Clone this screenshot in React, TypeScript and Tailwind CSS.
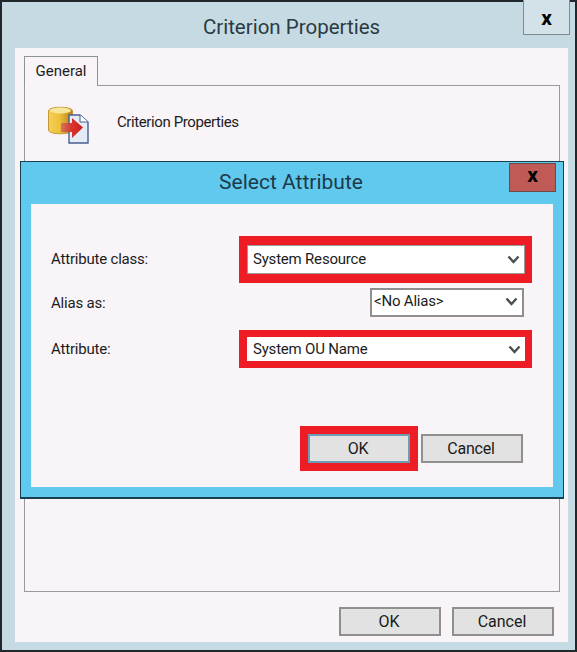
const sans = "font-['Roboto',sans-serif]";

function Chevron() {
  return (
    <svg width="13" height="9" viewBox="0 0 13 9" className="shrink-0">
      <path d="M1.5 1.5 L6.5 7 L11.5 1.5" fill="none" stroke="#4a4f52" strokeWidth="2.4" />
    </svg>
  );
}

function DbIcon() {
  return (
    <svg width="42" height="38" viewBox="0 0 42 38" className="shrink-0">
      <defs>
        <linearGradient id="db" x1="0" x2="1" y1="0" y2="0">
          <stop offset="0" stopColor="#f3cf58" />
          <stop offset="0.45" stopColor="#efc13a" />
          <stop offset="1" stopColor="#b57f12" />
        </linearGradient>
        <linearGradient id="arrow" x1="0" x2="1" y1="0" y2="0">
          <stop offset="0" stopColor="#cf7a5c" />
          <stop offset="0.45" stopColor="#d8372f" />
          <stop offset="1" stopColor="#cf1c1c" />
        </linearGradient>
      </defs>
      <path d="M0.5 5 C0.5 0 24.5 0 24.5 5 L24.5 24 C24.5 29 0.5 29 0.5 24 Z" fill="url(#db)" stroke="#c49a34" />
      <ellipse cx="12.5" cy="4.5" rx="10.5" ry="3" fill="#f8e69a" />
      <path d="M21 9 H32 L40 16 V37 H21 Z" fill="#e4ebf7" stroke="#45608f" strokeWidth="1.4" />
      <path d="M32 9 V16 H40" fill="#fff" stroke="#45608f" />
      <path d="M13 17 H24 V12 L35 21.5 L24 32 V26 H13 Z" fill="url(#arrow)" />
    </svg>
  );
}

function Button({ label, focused }: { label: string; focused?: boolean }) {
  return (
    <div
      className={`flex h-[29px] w-[102px] items-center justify-center border-2 bg-[#e2e2e2] pr-[2px] text-[16px] text-[#1a1a1a] ${
        focused ? 'border-[#6f9bb5]' : 'border-[#8f8f8f]'
      }`}
    >
      {label}
    </div>
  );
}

function Select({ value, className }: { value: string; className: string }) {
  return (
    <div className={`flex items-center justify-between bg-white pr-[4px] text-[15px] text-[#1c1c1c] ${className}`}>
      <span>{value}</span>
      <Chevron />
    </div>
  );
}

export default function App() {
  return (
    <div className={`relative flex h-[652px] w-[577px] flex-col border-2 border-[#20282c] bg-[#c6dae3] ${sans}`}>
      {/* title bar */}
      <div className="relative flex h-[46px] shrink-0 items-center justify-center pl-[6px] pt-[4px] text-[20.5px] text-[#2b3a42]">
        Criterion Properties
        <div className="absolute right-[5px] top-[-2px] flex h-[35px] w-[47px] items-center justify-center border-x border-b border-[#7c8b92] bg-[#d3e2e9] pt-[3px] text-[21px] font-bold text-black">
          x
        </div>
      </div>

      {/* window body */}
      <div className="mx-[13px] flex h-[594px] w-[553px] flex-col bg-[#f8f4f8] px-[9px] pt-[8px]">
        <div className="relative z-10 -mb-px flex h-[30px] w-[74px] items-center justify-center border border-b-0 border-[#8b9499] bg-[#f8f4f8] text-[15px] text-[#1c1c1c]">
          General
        </div>
        <div className="h-[507px] w-[536px] border border-[#9a9a9a]">
          <div className="flex items-start gap-[27px] pl-[23px] pt-[20px]">
            <DbIcon />
            <span className="mt-[5px] text-[15px] tracking-[-0.4px] text-[#1c1c1c]">Criterion Properties</span>
          </div>
        </div>
        <div className="mt-[15px] flex justify-end gap-[11px] pr-[5px]">
          <Button label="OK" />
          <Button label="Cancel" />
        </div>
      </div>

      {/* Select Attribute dialog */}
      <div className="absolute left-[18px] top-[159px] flex h-[337px] w-[544px] flex-col border border-[#17404f] bg-[#62c9ee] shadow-[0_1px_0_#17404f]">
        <div className="relative flex h-[42px] shrink-0 items-center justify-center pr-[2px] text-[21px] text-[#1c3a4a]">
          Select Attribute
          <div className="absolute right-[7px] top-[1px] flex h-[29px] w-[47px] items-center justify-center border border-[#6b4a48] bg-[#c05a56] pb-[3px] text-[21px] font-bold text-black">
            x
          </div>
        </div>
        <div className="mx-[10px] flex h-[283px] w-[522px] flex-col bg-[#f8f4f8] text-[15px] tracking-[-0.2px] text-[#1c1c1c]">
          <div className="mt-[32px] flex items-center justify-between pl-[20px] pr-[21px]">
            <span className="-mt-[1px]">Attribute class:</span>
            <div className="border-y-[9px] border-l-[8px] border-r-[7px] border-[#ee1c25]">
              <Select value="System Resource" className="h-[29px] w-[278px] border border-[#9a9a9a] pl-[5px]" />
            </div>
          </div>
          <div className="mt-[6px] flex items-center justify-between pl-[20px] pr-[29px]">
            <span className="mt-[1px]">Alias as:</span>
            <Select value="<No Alias>" className="-mt-[1px] h-[29px] w-[154px] border-2 border-[#8f8f8f] pb-[3px] pl-[2px]" />
          </div>
          <div className="mt-[13px] flex items-center justify-between pl-[20px] pr-[21px]">
            <span>Attribute:</span>
            <div className="border-y-[7px] border-l-[8px] border-r-[7px] border-[#ee1c25]">
              <Select value="System OU Name" className="h-[24px] w-[278px] pl-[6px]" />
            </div>
          </div>
          <div className="mt-[58px] flex items-center justify-end gap-[3px] pr-[30px]">
            <div className="border-[8px] border-[#ee1c25]">
              <Button label="OK" focused />
            </div>
            <Button label="Cancel" />
          </div>
        </div>
      </div>
    </div>
  );
}
